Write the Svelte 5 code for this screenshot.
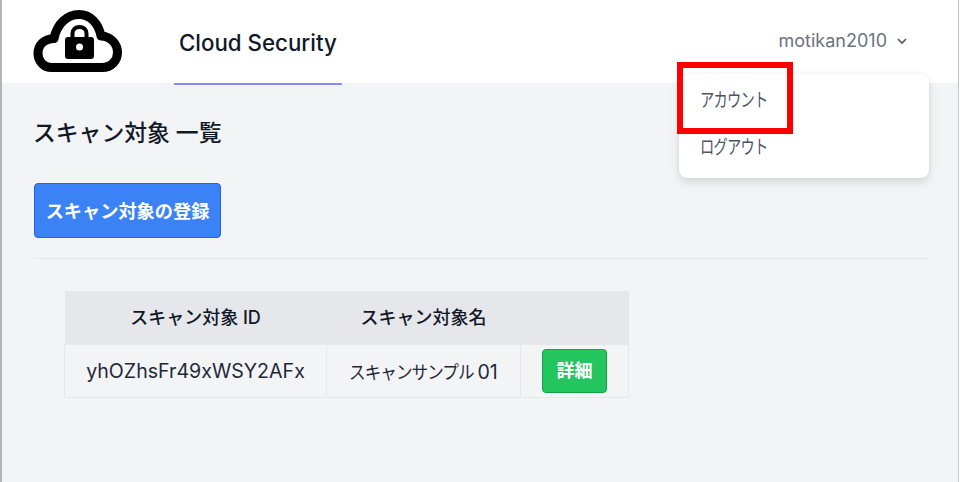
<script>
  const rows = [{ id: 'yhOZhsFr49xWSY2AFx', name: 'スキャンサンプル', num: '01' }];
</script>

<div class="shell">
<div class="page">
  <header class="top">
    <div class="logo">
      <svg width="90" height="64" viewBox="33 9 90 64" aria-hidden="true">
        <path d="M52 67.5 C43 67.5 38 60.5 38 53.5 C38 45 44 39 54 38.5 C57 24 67 14.5 79 14.5 C90 14.5 98.5 23 101 36 C111 36.5 117.5 44 117.5 52.5 C117.5 60.5 111.5 67.5 102 67.5 Z" fill="none" stroke="#000" stroke-width="9" stroke-linejoin="round"/>
        <path d="M72.5 38 V33.5 C72.5 29.5 75.5 27 79.5 27 C83.5 27 86.5 29.5 86.5 33.5 V38" fill="none" stroke="#000" stroke-width="4"/>
        <path fill-rule="evenodd" d="M68 37 H91 Q94 37 94 40 V56 Q94 59 91 59 H68 Q65 59 65 56 V40 Q65 37 68 37 Z M79.5 43.5 A3.5 3.5 0 1 0 79.5 50.5 A3.5 3.5 0 1 0 79.5 43.5 Z" fill="#000"/>
      </svg>
    </div>
    <nav class="tabs"><span class="tab">Cloud Security</span></nav>
    <div class="user">
      <span>motikan2010</span>
      <svg width="12" height="12" viewBox="0 0 12 12" aria-hidden="true"><path d="M2 4 L6 8 L10 4" fill="none" stroke="#4b5563" stroke-width="1.6"/></svg>
    </div>
  </header>

  <main class="content">
    <h1>スキャン対象 一覧</h1>
    <button class="primary">スキャン対象の登録</button>
    <hr />
    <table>
      <thead>
        <tr><th class="c1">スキャン対象 ID</th><th class="c2">スキャン対象名</th><th class="c3"></th></tr>
      </thead>
      <tbody>
        {#each rows as r}
          <tr>
            <td class="mono">{r.id}</td>
            <td><span class="name"><span class="narrow">{r.name}</span><span class="num">{r.num}</span></span></td>
            <td><button class="detail">詳細</button></td>
          </tr>
        {/each}
      </tbody>
    </table>
  </main>

  <div class="menu">
    <div class="item"><span class="narrow-menu">アカウント</span></div>
    <div class="item"><span class="narrow-menu">ログアウト</span></div>
  </div>
  <div class="mark"></div>
</div>
</div>

<style>
  :global(body) { margin: 0; background: #fff; }
  .shell { width: 960px; height: 482px; background: #fff; overflow: hidden; }
  .page {
    position: relative;
    width: 959px;
    height: 482px;
    box-sizing: border-box;
    border-left: 2px solid #b4b4b4;
    border-right: 1px solid #c4c4c4;
    background: #f3f4f6;
    overflow: hidden;
    font-family: Inter, "Noto Sans CJK JP", sans-serif;
  }
  .top {
    height: 83px;
    background: #fff;
    display: flex;
    align-items: flex-start;
    padding-left: 31px;
  }
  .logo { width: 141px; padding-top: 9px; display: flex; }
  .logo svg { display: block; }
  .tabs { height: 85px; position: relative; z-index: 1; }
  .tab {
    display: block;
    box-sizing: border-box;
    width: 168px;
    height: 85px;
    padding: 29px 0 0 5px;
    border-bottom: 2px solid #818cf8;
    font-size: 22.3px;
    line-height: 27px;
    font-weight: 500;
    color: #111827;
  }
  .user {
    margin-left: auto;
    margin-right: 50px;
    padding-top: 30px;
    display: flex;
    align-items: center;
    gap: 9px;
    font-size: 18px;
    line-height: 22px;
    font-weight: 400;
    color: #6b7280;
  }
  .content { padding: 34px 29px 0 31px; }
  h1 {
    margin: 0;
    font-size: 22.8px;
    line-height: 32px;
    font-weight: 500;
    color: #111827;
  }
  .primary {
    display: block;
    margin: 34px 0 0 1px;
    width: 187px;
    height: 55px;
    box-sizing: border-box;
    padding: 0;
    background: #3b82f6;
    border: 1px solid #2563eb;
    border-radius: 4px;
    color: #fff;
    font: 700 18.2px/24px Inter, "Noto Sans CJK JP", sans-serif;
  }
  hr {
    margin: 20px 0 0 1px;
    border: 0;
    border-top: 1px solid #e5e7eb;
  }
  table {
    margin: 32px 0 0 31px;
    border-collapse: collapse;
    table-layout: fixed;
    width: 564px;
    font-size: 18px;
    color: #1f2937;
  }
  thead tr { background: #e5e7eb; height: 53px; }
  th { font-weight: 500; color: #111827; font-size: 18px; padding: 0 0 2px; }
  .c1 { width: 262px; }
  .c2 { width: 194px; }
  .c3 { width: 108px; }
  tbody tr { height: 53px; }
  td {
    border: 1px solid #e5e7eb;
    text-align: center;
    padding: 0;
  }
  .mono { font-size: 19.6px; font-weight: 400; }
  .name { display: inline-flex; align-items: baseline; width: 150px; }
  .narrow {
    display: inline-block;
    width: 122px;
    flex: none;
    white-space: nowrap;
    letter-spacing: -1px;
    transform: scaleX(0.92);
    transform-origin: left center;
    text-align: left;
    font-size: 18px;
  }
  .num { margin-left: 7px; font-size: 19.6px; }
  .detail {
    display: block;
    margin: 0 auto;
    width: 65px;
    height: 44px;
    box-sizing: border-box;
    padding: 0;
    background: #22c55e;
    border: 1px solid #16a34a;
    border-radius: 4px;
    color: #fff;
    font: 700 18px/24px Inter, "Noto Sans CJK JP", sans-serif;
  }
  .menu {
    position: absolute;
    left: 677px;
    top: 74px;
    width: 250px;
    height: 104px;
    box-sizing: border-box;
    padding-top: 3px;
    background: #fff;
    border-radius: 8px;
    box-shadow: 0 4px 10px rgba(0, 0, 0, 0.13), 0 0 2px rgba(0, 0, 0, 0.08);
    z-index: 2;
  }
  .item {
    height: 47px;
    line-height: 47px;
    padding-left: 21px;
    font-size: 19px;
    color: #4b5563;
  }
  .narrow-menu {
    display: inline-block;
    white-space: nowrap;
    letter-spacing: -1px;
    transform: scaleX(0.75);
    transform-origin: left center;
  }
  .mark {
    position: absolute;
    left: 675px;
    top: 62px;
    width: 116px;
    height: 72px;
    box-sizing: border-box;
    border: 6px solid #f00;
    z-index: 3;
  }
</style>
